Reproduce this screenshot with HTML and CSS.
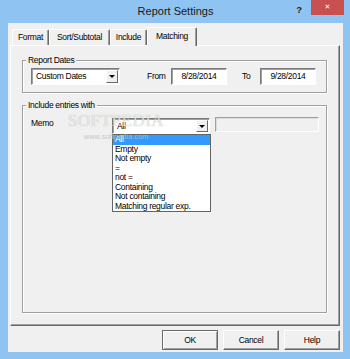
FILE: index.html
```html
<!DOCTYPE html>
<html>
<head>
    <title>Report Settings</title>
    <link rel="stylesheet" href="styles.css">
</head>
<body>
    <div class="window">
        <div class="titlebar">
            <span class="title">Report Settings</span>
            <div class="caption">
                <span class="help">?</span>
                <span class="close">&#x2715;</span>
            </div>
        </div>

        <div class="client">
            <div class="tabs">
                <div class="tab tab-format">Format</div>
                <div class="tab tab-sort">Sort/Subtotal</div>
                <div class="tab tab-include">Include</div>
                <div class="tab tab-matching active">Matching</div>
            </div>

            <div class="panel">
                <fieldset class="group dates">
                    <legend>Report Dates</legend>
                    <div class="row">
                        <div class="combo combo-dates">
                            <span class="combo-text">Custom Dates</span>
                            <span class="combo-btn"><i class="arrow"></i></span>
                        </div>
                        <span class="lbl lbl-from">From</span>
                        <div class="field">8/28/2014</div>
                        <span class="lbl lbl-to">To</span>
                        <div class="field">9/28/2014</div>
                    </div>
                </fieldset>

                <fieldset class="group entries">
                    <legend>Include entries with</legend>
                    <div class="row memo-row">
                        <span class="lbl lbl-memo">Memo</span>
                        <div class="combo combo-memo">
                            <span class="combo-text">All</span>
                            <span class="combo-btn"><i class="arrow"></i></span>
                            <ul class="droplist">
                                <li class="selected">All</li>
                                <li>Empty</li>
                                <li>Not empty</li>
                                <li>=</li>
                                <li>not =</li>
                                <li>Containing</li>
                                <li>Not containing</li>
                                <li>Matching regular exp.</li>
                            </ul>
                        </div>
                        <div class="field field-off"></div>
                    </div>
                </fieldset>

                <div class="watermark">
                    <span class="wm-big">SOFTPEDIA</span>
                    <span class="wm-small">www.softpedia.com</span>
                </div>
            </div>

            <div class="buttons">
                <div class="btn btn-default">OK</div>
                <div class="btn">Cancel</div>
                <div class="btn">Help</div>
            </div>
        </div>
    </div>
</body>
</html>
```

FILE: styles.css
```css
body {
    margin: 0;
    font: normal 8.5px/1 "Liberation Sans", Arial, sans-serif;
    letter-spacing: -0.3px;
    color: #000;
}

.window {
    width: 350px;
    height: 359px;
    box-sizing: border-box;
    padding: 0 7px 7px 8px;
    background: #8fc3f1;
    display: flex;
    flex-direction: column;
}

/* title bar */
.titlebar {
    height: 23px;
    flex: none;
    display: grid;
    grid-template-columns: 1fr auto 1fr;
    align-items: start;
}

.title {
    grid-column: 2;
    font-size: 11px;
    line-height: 23px;
    letter-spacing: 0;
    color: #1a1a1a;
}

.caption {
    grid-column: 3;
    justify-self: end;
    display: flex;
    margin-right: -1px;
}

.help {
    width: 24px;
    font: bold 9.5px/19px "Liberation Sans", Arial, sans-serif;
    text-align: center;
    color: #222;
}

.close {
    width: 33px;
    height: 15px;
    background: #c75050;
    color: #fff;
    font: bold 7px/15px "DejaVu Sans", sans-serif;
    letter-spacing: 0;
    text-align: center;
}

/* dialog body */
.client {
    flex: 1;
    background: #f0f0f0;
    padding: 4px 3px 2px 2px;
    display: flex;
    flex-direction: column;
}

.tabs {
    height: 18px;
    display: flex;
    align-items: flex-end;
    padding-left: 2px;
}

.tab {
    height: 16px;
    box-sizing: border-box;
    border: 1px solid #fff;
    border-right-color: #696969;
    border-bottom: none;
    border-radius: 2px 2px 0 0;
    box-shadow: inset -1px 0 #a0a0a0;
    line-height: 15px;
    text-align: center;
}

.tab-format { width: 37px; }
.tab-sort { width: 61px; }
.tab-include { width: 37px; }
.tab-matching { width: 50px; }

.tab.active {
    height: 19px;
    margin-bottom: -1px;
    line-height: 16px;
    background: #f0f0f0;
    position: relative;
    z-index: 1;
}

.panel {
    height: 281px;
    box-sizing: border-box;
    border: 1px solid;
    border-color: #fff #696969 #696969 #fff;
    box-shadow: inset -1px -1px #a0a0a0;
    padding: 9px 0 0 11px;
    position: relative;
}

/* group boxes */
.group {
    margin: 0;
    width: 305px;
    box-sizing: border-box;
    border: 1px solid #a0a0a0;
    box-shadow: inset 1px 1px #fff, 1px 1px #fff;
    padding: 3px 0 7px 8px;
}

.group legend {
    margin-left: -5px;
    padding: 0 2px;
    line-height: 10px;
    background: #f0f0f0;
}

.entries {
    margin-top: 7px;
    height: 213px;
    padding-top: 8px;
}

.row {
    display: flex;
    align-items: center;
}

.memo-row {
    align-items: flex-start;
}

.lbl {
    line-height: 15px;
}

.lbl-from {
    width: 24px;
    margin-left: 27px;
}

.lbl-to {
    width: 18px;
    margin-left: 15px;
}

.lbl-memo {
    width: 81px;
    line-height: 11px;
}

/* sunken controls */
.combo, .field {
    box-sizing: border-box;
    border: 1px solid;
    border-color: #7a7a7a #fff #fff #7a7a7a;
    box-shadow: inset 1px 1px #a0a0a0;
    background: #fff;
}

.combo {
    display: flex;
    height: 17px;
    padding: 1px;
    position: relative;
}

.combo-dates { width: 89px; }

.combo-memo {
    width: 98px;
    height: 16px;
}

.combo-text {
    flex: 1;
    padding-left: 3px;
    line-height: 13px;
}

.combo-memo .combo-text {
    line-height: 12px;
}

.combo-btn {
    width: 12px;
    box-sizing: border-box;
    background: #f0f0f0;
    border: 1px solid;
    border-color: #fff #696969 #696969 #fff;
    display: flex;
    align-items: center;
    justify-content: center;
}

.arrow {
    width: 0;
    height: 0;
    border-left: 3px solid transparent;
    border-right: 3px solid transparent;
    border-top: 3px solid #000;
}

.field {
    width: 56px;
    height: 17px;
    line-height: 15px;
    text-align: center;
}

.field-off {
    width: 104px;
    height: 15px;
    margin-left: 5px;
    margin-top: -1px;
    background: #f0f0f0;
    border-color: #a0a0a0 #fff #fff #a0a0a0;
    box-shadow: inset 1px 1px #dcdcdc;
}

/* open list of the memo combo */
.droplist {
    position: absolute;
    left: -1px;
    top: 15px;
    width: 99px;
    height: 78px;
    box-sizing: border-box;
    margin: 0;
    padding: 0;
    list-style: none;
    background: #fff;
    border: 1px solid #646464;
    z-index: 2;
}

.droplist li {
    height: 9.5px;
    line-height: 9.5px;
    padding-left: 2px;
    white-space: nowrap;
}

.droplist li.selected {
    background: #3399ff;
    color: #fff;
}

/* screenshot watermark */
.watermark {
    position: absolute;
    left: 57px;
    top: 67px;
    z-index: 3;
    display: flex;
    flex-direction: column;
    align-items: center;
    pointer-events: none;
}

.wm-big {
    font: 17px/16px "Liberation Serif", serif;
    color: rgba(255, 255, 255, 0.7);
    text-shadow: 0 0 1px rgba(110, 110, 110, 0.55);
    letter-spacing: 0.5px;
}

.wm-small {
    margin-top: 4px;
    font: 7.5px/8px "Liberation Sans", sans-serif;
    letter-spacing: 0;
    color: rgba(190, 190, 190, 0.85);
}

/* buttons */
.buttons {
    display: flex;
    justify-content: flex-end;
    gap: 5px;
    margin-top: 4px;
}

.btn {
    width: 56px;
    height: 20px;
    box-sizing: border-box;
    border: 1px solid;
    border-color: #fff #696969 #696969 #fff;
    box-shadow: inset -1px -1px #a0a0a0;
    line-height: 18px;
    text-align: center;
}

.btn-default {
    border-color: #696969;
    box-shadow: inset 1px 1px #fff, inset -1px -1px #a0a0a0;
}
```
